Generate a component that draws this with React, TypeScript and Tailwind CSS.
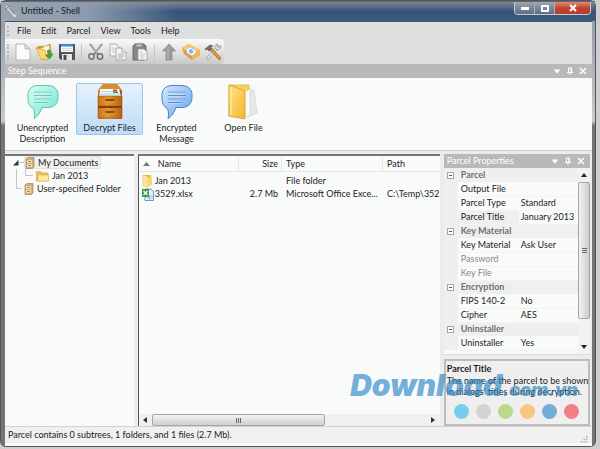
import clsx from "clsx";
import type { ReactNode } from "react";

const menus = ["File", "Edit", "Parcel", "View", "Tools", "Help"];

function NewIcon() {
  return (
    <svg viewBox="0 0 18 18" className="size-[18px]">
      <path d="M2 1h9l5 5v11H2z" fill="#fbfbfb" stroke="#b4b4b4" />
      <path d="M11 1v5h5z" fill="#e1e1e1" stroke="#b4b4b4" />
    </svg>
  );
}

function OpenIcon() {
  return (
    <svg viewBox="0 0 18 18" className="size-[18px]">
      <path d="M1 4l5-1 2 1 6-3 1 10-8 6z" fill="#d99a26" stroke="#b9811c" strokeWidth=".6" />
      <path d="M4 6l9-4 1 9-7 4z" fill="#fff6d8" />
      <path d="M0 5l9 2 3 10-7-1z" fill="#fcd76e" stroke="#d9a136" strokeWidth=".7" />
      <path d="M12 7c3 0 3 2 3 4h2l-3.500 5-4-4h2c.5-2 .5-3-.5-4z" fill="#3fa535" stroke="#2a7f25" strokeWidth=".5" />
    </svg>
  );
}

function SaveIcon() {
  return (
    <svg viewBox="0 0 18 18" className="size-[18px]">
      <path d="M1 1h16v16H3l-2-2z" fill="#515457" />
      <path d="M3 1h12v8H3z" fill="#f5f8fb" />
      <path d="M3 1h12v2.500H3z" fill="#3f8ac9" />
      <path d="M4 5.500h10M4 7.500h10" stroke="#c5cbd0" strokeWidth=".7" />
      <path d="M4 11h10v6H4z" fill="#e5e5e5" />
      <path d="M5.500 12h3v5h-3z" fill="#46494c" />
    </svg>
  );
}

function CutIcon() {
  return (
    <svg viewBox="0 0 18 18" className="size-[18px]" fill="none">
      <path d="M3 1l8.500 11M15 1L6.500 12" stroke="#8b8b8b" strokeWidth="2" />
      <path d="M4 2l6 8M14 2l-5 7" stroke="#d4d4d4" strokeWidth=".6" />
      <circle cx="4.500" cy="13.500" r="2.700" stroke="#707070" strokeWidth="1.500" />
      <circle cx="13" cy="13.500" r="2.700" stroke="#707070" strokeWidth="1.500" />
    </svg>
  );
}

function CopyIcon() {
  return (
    <svg viewBox="0 0 18 18" className="size-[18px]" fill="#f4f4f4" stroke="#a3a3a3" strokeWidth=".9">
      <path d="M1 1h6l3 3v9H1z" />
      <path d="M3 5h4M3 7h4M3 9h4" stroke="#c9c9c9" />
      <path d="M7 5h6l4 4v8H7z" />
      <path d="M13 5v4h4M9 11h6M9 13h6M9 15h5" />
    </svg>
  );
}

function PasteIcon() {
  return (
    <svg viewBox="0 0 18 18" className="size-[18px]">
      <path d="M2 3l2-2h9l2 2v12l-2 2H2z" fill="#898989" stroke="#6a6a6a" />
      <path d="M5 1h6v3H5z" fill="#c3c3c3" stroke="#777" strokeWidth=".6" />
      <path d="M7 6h6l3 3v8H7z" fill="#f8f8f8" stroke="#969696" strokeWidth=".8" />
      <path d="M9 9h3M9 11h5M9 13h5M9 15h4" stroke="#b9b9b9" strokeWidth=".8" />
    </svg>
  );
}

function UpIcon() {
  return (
    <svg viewBox="0 0 18 18" className="size-[18px]">
      <path d="M9 1l6.500 7H12v9H6V8H2.500z" fill="#9b9b9b" stroke="#7f7f7f" strokeWidth=".6" />
      <path d="M8 4v12" stroke="#bdbdbd" />
    </svg>
  );
}

function ParcelIcon() {
  return (
    <svg viewBox="0 0 18 18" className="size-[18px]">
      <path d="M0 5l7-4 11 6v5l-8 5-8-6z" fill="#f0982a" />
      <path d="M0 5l7-4 11 6-8 5z" fill="#ffc862" />
      <path d="M10 12v5l8-5V7z" fill="#fbb347" />
      <path d="M4 6l4-2 6 3v3l-4 3-5-3z" fill="#eaf5ff" stroke="#9dbfe6" strokeWidth=".7" />
      <path d="M7 7l2-1 2 1.500v2L9 10.500 7 9z" fill="#7db1ec" />
    </svg>
  );
}

function ToolsIcon() {
  return (
    <svg viewBox="0 0 18 18" className="size-[18px]" fill="none" strokeLinecap="round">
      <path d="M14 4L4 15" stroke="#8d9094" strokeWidth="3.200" />
      <path d="M14 4L4 15" stroke="#e2e4e6" strokeWidth="2" />
      <path d="M16.500 3l-2 1.500-1.500-1 .5-2.500c-3 .5-3 3-2 4.500 1 1.500 4 1.500 5-.5z" fill="#dfe1e3" stroke="#85888b" strokeWidth=".7" />
      <path d="M7 6l8.500 9.500" stroke="#a8691d" strokeWidth="3" />
      <path d="M7.500 6.500l8 9" stroke="#eda23b" strokeWidth="1.400" />
      <path d="M1 6l5-4 3 1-3 2 1 2-2 1-2-2-1 1z" fill="#6b6d6f" stroke="#4c4c4c" strokeWidth=".5" />
    </svg>
  );
}

const tools: { label: string; icon: ReactNode; divider?: boolean }[] = [
  { label: "New", icon: <NewIcon /> },
  { label: "Open", icon: <OpenIcon /> },
  { label: "Save", icon: <SaveIcon /> },
  { label: "Cut", icon: <CutIcon />, divider: true },
  { label: "Copy", icon: <CopyIcon /> },
  { label: "Paste", icon: <PasteIcon /> },
  { label: "Up", icon: <UpIcon />, divider: true },
  { label: "Build parcel", icon: <ParcelIcon /> },
  { label: "Options", icon: <ToolsIcon /> },
];

function BubbleIcon({ id, light, dark, line }: { id: string; light: string; dark: string; line: string }) {
  return (
    <svg viewBox="0 0 34 36" className="h-9 w-[34px]">
      <defs>
        <linearGradient id={id} x1="0" y1="0" x2="1" y2="1">
          <stop offset="0" stopColor={light} />
          <stop offset="1" stopColor={dark} />
        </linearGradient>
      </defs>
      <path
        d="M12 1.500h10c6 0 10 4 10 9v3c0 6-4 10-10 10h-6c-2 5-4 9-8 11 1-4 .5-7-.5-10-4-2-5.500-5-5.500-10v-4c0-5 4-9 10-9z"
        fill={`url(#${id})`}
        stroke={line}
        strokeWidth="1"
      />
      <path d="M8 8h18M8 11.500h18M8 15h18M8 18.500h14" stroke="#fff" strokeWidth="2.200" opacity=".5" />
      <path d="M8 8h18M8 11.500h18M8 15h18M8 18.500h14" stroke={line} strokeWidth=".9" />
    </svg>
  );
}

function CabinetIcon() {
  return (
    <svg viewBox="0 0 34 36" className="h-9 w-[34px]">
      <defs>
        <linearGradient id="wood" x1="0" y1="0" x2="1" y2="0">
          <stop offset="0" stopColor="#c9731a" />
          <stop offset=".4" stopColor="#e9962f" />
          <stop offset="1" stopColor="#b5620f" />
        </linearGradient>
      </defs>
      <path d="M10 0h14l5 7v28H5V7z" fill="url(#wood)" />
      <path d="M10 0h14l5 6H5z" fill="#dd8b2c" />
      <path d="M6 7h22v5H6z" fill="#7b4410" />
      <path d="M7 5h19l2 7H6z" fill="#f3f8fb" />
      <path d="M8 7.500h12M7 10h20" stroke="#9ed1e4" strokeWidth=".9" />
      <path d="M20 5.500h4v2h-4z" fill="#c94734" />
      <path d="M20 7.500h5v1.500h-5z" fill="#32975b" />
      <path d="M5 12h24v10H5zM5 23h24v11H5z" fill="url(#wood)" stroke="#9a520f" strokeWidth=".6" />
      <path d="M5 22h24v2H5z" fill="#7d410b" />
      <path d="M12 15h10l-1 2.500h-8zM12 27h10l-1 2.500h-8z" fill="#8d4b0e" />
      <path d="M12 17.800h10M12 29.800h10" stroke="#f1b25d" strokeWidth=".7" />
    </svg>
  );
}

function FolderIcon() {
  return (
    <svg viewBox="0 0 34 36" className="h-9 w-[34px]">
      <defs>
        <linearGradient id="gold" x1="0" y1="0" x2="1" y2="1">
          <stop offset="0" stopColor="#ffe48a" />
          <stop offset="1" stopColor="#f4b52c" />
        </linearGradient>
      </defs>
      <path d="M19 4l8 2 3 23-10 4z" fill="#e5e7ea" stroke="#cdd0d4" strokeWidth=".6" />
      <path d="M16 3l7 2v26l-5 2z" fill="#fafafa" stroke="#d0d0d0" strokeWidth=".6" />
      <path d="M2 1h20v4l-6 4v23H2z" fill="#f8cf62" stroke="#e0a934" strokeWidth=".7" />
      <path d="M2 1l14 5c2 1 2 2 2 4v25L2 32z" fill="url(#gold)" stroke="#dca12a" strokeWidth=".9" />
      <path d="M4 4v27" stroke="#fff0b8" />
    </svg>
  );
}

const steps = [
  {
    label: "Unencrypted Description",
    icon: <BubbleIcon id="mint" light="#d6fff4" dark="#6fe6cf" line="#5cc2b0" />,
  },
  { label: "Decrypt Files", icon: <CabinetIcon />, active: true },
  {
    label: "Encrypted Message",
    icon: <BubbleIcon id="blue" light="#d3e9ff" dark="#64a2ec" line="#4d82cb" />,
  },
  { label: "Open File", icon: <FolderIcon /> },
];

function TreeCabinet() {
  return (
    <svg viewBox="0 0 10 12" className="h-3 w-2.5 shrink-0">
      <path d="M1 2l2-1.500h6V10l-1.500 1.500H1z" fill="#cfae79" stroke="#a3845a" strokeWidth=".7" />
      <path d="M2 3h5v3H2zM2 7h5v3H2z" fill="#f0dbb3" />
      <path d="M3.500 4.500h2M3.500 8.500h2" stroke="#7c6038" />
    </svg>
  );
}

function TreeFolder() {
  return (
    <svg viewBox="0 0 13 12" className="h-3 w-[13px] shrink-0">
      <path d="M.5 1.500h4L6 3h6v8H.5z" fill="#edbf55" stroke="#d8a744" strokeWidth=".7" />
      <path d="M2 5h10.500v6H2z" fill="#ffe8a4" stroke="#dba947" strokeWidth=".6" />
    </svg>
  );
}

function RowFolder() {
  return (
    <svg viewBox="0 0 12 13" className="h-[13px] w-3 shrink-0">
      <path d="M1 1h8v10H1z" fill="#eebf4d" />
      <path d="M1 1l5 1.500V13l-5-1.500z" fill="#ffe79a" stroke="#e0b149" strokeWidth=".5" />
      <path d="M6 4l4-1v8l-4 2z" fill="#f9d671" />
    </svg>
  );
}

function RowSheet() {
  return (
    <svg viewBox="0 0 12 13" className="h-[13px] w-3 shrink-0">
      <path d="M3 1h6l2.500 3v8.500H3z" fill="#eaf1fb" stroke="#5b7fb5" strokeWidth=".8" />
      <path d="M5 8h6M5 10h6M7.500 7v5" stroke="#7ea3d4" strokeWidth=".6" />
      <path d="M0 1h7v8H0z" fill="#3b9c47" />
      <path d="M1.500 3l4 4M5.500 3l-4 4" stroke="#fff" strokeWidth="1.200" />
    </svg>
  );
}

function PanelHeader({ title }: { title: string }) {
  return (
    <header className="flex h-3.5 shrink-0 items-center justify-between bg-[#b9b9b9] pr-1 pl-[3px] text-white">
      <h2>{title}</h2>
      <div className="flex items-center gap-[3px]">
        <button aria-label="Panel menu">
          <svg viewBox="0 0 10 10" className="size-2.5">
            <path d="M1.500 3.500h7L5 7.500z" fill="#fff" />
          </svg>
        </button>
        <button aria-label="Pin panel">
          <svg viewBox="0 0 10 10" className="size-2.5" fill="none" stroke="#fff">
            <path d="M3.500 6V2h3v4M6 2v4M2 6.500h6M5 6.500V9" />
          </svg>
        </button>
        <button aria-label="Close panel">
          <svg viewBox="0 0 10 10" className="size-2.5">
            <path d="M2 2l6 6M8 2L2 8" stroke="#fff" strokeWidth="1.500" />
          </svg>
        </button>
      </div>
    </header>
  );
}

function Grip({ className }: { className: string }) {
  return (
    <span className={clsx("w-0 border-l-2 border-dotted border-[#b5b5b5]", className)} />
  );
}

function TitleBar() {
  return (
    <header className="flex h-5 shrink-0 items-start justify-between border-t border-[#636a72] bg-linear-to-b from-[#7d858e] via-[#34547c] to-[#3d5a80]">
      <div className="flex h-[19px] w-44 items-center gap-1 bg-linear-to-r from-[#9aa5b2] via-[#8b9aad] to-transparent pb-0.5 pl-1">
        <svg viewBox="0 0 12 12" className="size-3" fill="none" strokeLinecap="round">
          <path d="M2 2l8 9" stroke="#dde3ec" strokeWidth="2" />
          <path d="M1 4l3-3M4 3l5 6" stroke="#64748c" />
        </svg>
        <h1 className="text-[#101828]">Untitled - Shell</h1>
      </div>
      <div className="mr-1 flex h-[13px] overflow-hidden rounded-b-sm border border-t-0 border-[#c3ccd7]">
        <button aria-label="Minimize" className="grid w-5 place-items-center border-r border-[#a9b3bf] bg-linear-to-b from-[#9aa5b2] to-[#5e6e82]">
          <span className="h-[3px] w-2 bg-white" />
        </button>
        <button aria-label="Maximize" className="grid w-5 place-items-center border-r border-[#a9b3bf] bg-linear-to-b from-[#9aa5b2] to-[#5e6e82]">
          <span className="h-[7px] w-2 border-2 border-white" />
        </button>
        <button aria-label="Close" className="grid w-[35px] place-items-center bg-linear-to-b from-[#d98a7c] via-[#c2412c] to-[#b2402d]">
          <svg viewBox="0 0 10 10" className="size-2.5">
            <path d="M2 2l6 6M8 2L2 8" stroke="#fff" strokeWidth="2" />
          </svg>
        </button>
      </div>
    </header>
  );
}

function StepSequence() {
  return (
    <section className="flex flex-col border-b border-[#cfcfcf] bg-[#f9fbfa]">
      <PanelHeader title="Step Sequence" />
      <div className="flex h-18 items-start px-1 pt-[5px]">
        {steps.map((step) => (
          <button
            key={step.label}
            className={clsx(
              "flex w-[67px] flex-col items-center rounded-xs border text-center leading-[11px]",
              step.active
                ? "border-[#9cc5ea] bg-linear-to-b from-[#e6f1fc] to-[#bedcf8] pb-px"
                : "border-transparent",
            )}
          >
            {step.icon}
            <span className="mt-0.5 w-14">{step.label}</span>
          </button>
        ))}
      </div>
    </section>
  );
}

function FolderTree() {
  return (
    <nav className="w-[22%] shrink-0 border-t-2 border-[#777] bg-[#f9fbfa] pl-2">
      <ul>
        <li>
          <div className="flex h-[13px] items-center">
            <svg viewBox="0 0 6 6" className="size-1.5">
              <path d="M5.500 0v5.500H0z" fill="#333" />
            </svg>
            <span className="ml-px w-1 border-t border-[#bbb]" />
            <button className="flex h-[13px] items-center gap-[3px] rounded-xs border border-[#e2e2e2] bg-[#f1f1f1] pr-0.5">
              <TreeCabinet />
              My Documents
            </button>
          </div>
          <ul className="ml-[3px] border-l border-[#c4c4c4] pl-2">
            <li className="flex h-[13px] items-center gap-[3px]">
              <span className="h-[7px] w-2 self-start border-b border-l border-[#c4c4c4]" />
              <TreeFolder />
              Jan 2013
            </li>
          </ul>
        </li>
        <li className="ml-[3px] flex h-[13px] items-center gap-[3px]">
          <span className="h-[7px] w-[5px] self-start border-b border-l border-[#c4c4c4]" />
          <TreeCabinet />
          User-specified Folder
        </li>
      </ul>
    </nav>
  );
}

function FileList() {
  return (
    <section className="flex min-w-0 flex-1 flex-col border-t-2 border-l border-t-[#777] border-l-[#555] bg-[#f9fbfa]">
      <div className="min-h-0 flex-1 overflow-hidden">
        <table className="w-full table-fixed border-separate border-spacing-0 whitespace-nowrap">
          <thead>
            <tr className="h-4 text-left">
              <th className="w-1/3 border-r border-b border-[#e4e6e7] pl-1 font-normal">
                <span className="flex items-center gap-2">
                  <svg viewBox="0 0 7 4" className="h-1 w-[7px]">
                    <path d="M0 4l3.500-4L7 4z" fill="#777" />
                  </svg>
                  Name
                </span>
              </th>
              <th className="w-[43px] border-r border-b border-[#e4e6e7] pr-[3px] text-right font-normal">Size</th>
              <th className="w-[101px] border-r border-b border-[#e4e6e7] pl-1 font-normal">Type</th>
              <th className="border-b border-[#e4e6e7] pl-1 font-normal">Path</th>
            </tr>
          </thead>
          <tbody>
            <tr>
              <td className="h-3.5 pt-0.5 pl-[3px]">
                <span className="flex items-center gap-px"><RowFolder />Jan 2013</span>
              </td>
              <td />
              <td className="pt-0.5 pl-1">File folder</td>
              <td />
            </tr>
            <tr>
              <td className="h-3.5 pl-[3px]">
                <span className="flex items-center gap-px"><RowSheet />3529.xlsx</span>
              </td>
              <td className="pr-1 text-right">2.7 Mb</td>
              <td className="pl-1">Microsoft Office Exce...</td>
              <td className="pl-1">C:\Temp\352</td>
            </tr>
          </tbody>
        </table>
      </div>
      <div className="flex h-3 shrink-0 items-center bg-[#f0f0f0]">
        <button aria-label="Scroll left" className="grid w-[13px] place-items-center">
          <svg viewBox="0 0 4 6" className="h-1.5 w-1"><path d="M4 0v6L0 3z" fill="#333" /></svg>
        </button>
        <div className="h-full flex-1">
          <div className="flex h-full w-[63%] items-center justify-center gap-px rounded-xs border border-[#a5a5a5] bg-linear-to-b from-[#f3f3f3] to-[#cfd0d2]">
            <span className="h-[5px] w-px bg-[#666]" />
            <span className="h-[5px] w-px bg-[#666]" />
            <span className="h-[5px] w-px bg-[#666]" />
          </div>
        </div>
        <button aria-label="Scroll right" className="grid w-[13px] place-items-center">
          <svg viewBox="0 0 4 6" className="h-1.5 w-1"><path d="M0 0v6l4-3z" fill="#333" /></svg>
        </button>
      </div>
    </section>
  );
}

const groups = [
  {
    name: "Parcel",
    rows: [
      { name: "Output File", value: "" },
      { name: "Parcel Type", value: "Standard" },
      { name: "Parcel Title", value: "January 2013", selected: true },
    ],
  },
  {
    name: "Key Material",
    rows: [
      { name: "Key Material", value: "Ask User" },
      { name: "Password", value: "", disabled: true },
      { name: "Key File", value: "", disabled: true },
    ],
  },
  {
    name: "Encryption",
    rows: [
      { name: "FIPS 140-2", value: "No" },
      { name: "Cipher", value: "AES" },
    ],
  },
  { name: "Uninstaller", rows: [{ name: "Uninstaller", value: "Yes" }] },
];

const dots = ["bg-[#76cdf0]", "bg-[#d3d3d3]", "bg-[#b9da8e]", "bg-[#f6c77c]", "bg-[#72add6]", "bg-[#f08085]"];

function Properties() {
  return (
    <aside className="flex w-[25%] shrink-0 flex-col">
      <PanelHeader title="Parcel Properties" />
      <div className="flex flex-1 border-b border-[#dcdcdc] bg-[#f9fbfa]">
        <table className="flex-1 border-collapse self-start text-left whitespace-nowrap">
          {groups.map((group) => (
            <tbody key={group.name}>
              <tr className="h-3.5 bg-[#efefef]">
                <td className="w-3.5 p-0">
                  <button aria-label={`Collapse ${group.name}`} className="ml-[3px] grid size-[7px] place-items-center border border-[#9aa5b5] bg-white">
                    <span className="h-px w-[3px] bg-[#555]" />
                  </button>
                </td>
                <th colSpan={2} className="py-0 pl-[3px] font-bold text-[#707070]">{group.name}</th>
              </tr>
              {group.rows.map((row) => (
                <tr key={row.name} className="h-3.5">
                  <td className="bg-[#efefef] p-0" />
                  <th
                    className={clsx(
                      "w-[61px] border-b border-[#f2f3f3] py-0 pl-[3px] font-normal",
                      row.disabled && "text-[#888]",
                      row.selected && "bg-[#efefef]",
                    )}
                  >
                    {row.name}
                  </th>
                  <td className="border-b border-[#f2f3f3] py-0 pl-0.5">{row.value}</td>
                </tr>
              ))}
            </tbody>
          ))}
        </table>
        <div className="flex w-3 shrink-0 flex-col items-center bg-[#f2f2f2]">
          <button aria-label="Scroll up" className="grid h-3.5 place-items-center">
            <svg viewBox="0 0 6 4" className="h-1 w-1.5"><path d="M0 4l3-4 3 4z" fill="#222" /></svg>
          </button>
          <div className="w-full flex-1">
            <div className="flex h-[87%] w-full flex-col items-center justify-center gap-px rounded-xs border border-[#a5a5a5] bg-linear-to-r from-[#f3f3f3] to-[#cbccce]">
              <span className="h-px w-[5px] bg-[#666]" />
              <span className="h-px w-[5px] bg-[#666]" />
              <span className="h-px w-[5px] bg-[#666]" />
            </div>
          </div>
          <button aria-label="Scroll down" className="grid h-3.5 place-items-center">
            <svg viewBox="0 0 6 4" className="h-1 w-1.5"><path d="M0 0h6L3 4z" fill="#222" /></svg>
          </button>
        </div>
      </div>
      <div className="mt-1 h-[67px] border-2 border-[#bdbdbd] bg-[#efefef] pt-px pl-px">
        <h3 className="font-bold leading-[13px]">Parcel Title</h3>
        <p className="leading-[11px] whitespace-nowrap">
          The name of the parcel to be shown
          <br />
          in dialogs' titles during decryption.
        </p>
        <div className="mt-[7px] flex gap-[7px] pl-[7px]">
          {dots.map((dot) => (
            <span key={dot} className={clsx("size-[15px] rounded-full", dot)} />
          ))}
        </div>
      </div>
    </aside>
  );
}

export default function App() {
  return (
    <div className="flex min-h-screen bg-[#cfcfcf] pb-0.5 font-['Lato',sans-serif] text-[9px] leading-3 text-[#1c1c24]">
      <div className="mr-1 flex flex-1 flex-col rounded-md border border-[#555] bg-linear-to-b from-[#8a96a5] via-[#c9cccf] via-27% to-[#747474] to-28%">
        <TitleBar />
        <div className="mr-[3px] ml-1 flex flex-1 flex-col border-t border-[#555] bg-[#ececec]">
          <div className="bg-[#dedfdf]">
            <nav className="flex h-[17px] items-center pl-0.5">
              <Grip className="mr-2 h-2.5" />
              <div className="flex gap-2.5">
                {menus.map((menu) => (
                  <button key={menu}>{menu}</button>
                ))}
              </div>
            </nav>
            <div className="flex h-[25px] w-fit items-center rounded-r-sm bg-linear-to-b from-[#fafafa] to-[#c9c9c9] pr-0.5 pl-0.5">
              <Grip className="mr-[5px] h-4" />
              <div className="flex items-center gap-1">
                {tools.map((tool) => (
                  <div key={tool.label} className="flex items-center gap-1">
                    {tool.divider && <span className="mx-px h-4 w-px bg-[#c6c6c6]" />}
                    <button aria-label={tool.label}>{tool.icon}</button>
                  </div>
                ))}
              </div>
            </div>
          </div>
          <StepSequence />
          <main className="relative mt-[3px] flex flex-1 gap-1 pr-0.5">
            <FolderTree />
            <FileList />
            <Properties />
            <div className="pointer-events-none absolute right-3.5 bottom-5 flex items-baseline font-['Inter',sans-serif] font-black text-[#2b87c8] italic opacity-65">
              <span className="text-[30px] leading-8">Download</span>
              <span className="text-[18px] leading-8">.com.vn</span>
            </div>
          </main>
          <footer className="flex h-[17px] shrink-0 items-center justify-between border-t border-[#d2d2d2] bg-[#f0f0f0] pr-1 pl-[3px]">
            <p>Parcel contains 0 subtrees, 1 folders, and 1 files (2.7 Mb).</p>
            <svg viewBox="0 0 7 7" className="size-[7px] self-end" fill="#b3b3b3">
              <path d="M5 0h1.500v1.500H5zM5 2.500h1.500V4H5zM5 5h1.500v1.500H5zM2.500 2.500H4V4H2.500zM2.500 5H4v1.500H2.500zM0 5h1.500v1.500H0z" />
            </svg>
          </footer>
          <div className="h-[3px] bg-[#fafafa]" />
        </div>
      </div>
    </div>
  );
}
